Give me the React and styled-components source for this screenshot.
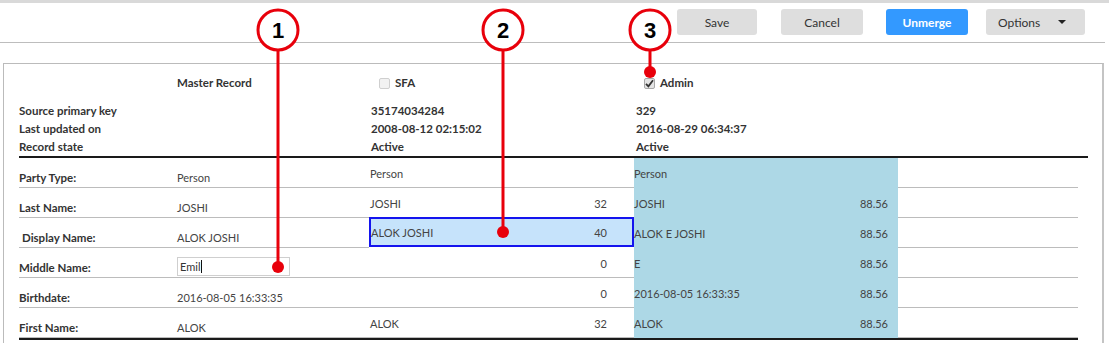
import React from 'react';
import styled, { createGlobalStyle } from 'styled-components';

const Global = createGlobalStyle`
  html, body { margin: 0; padding: 0; background: #fff; }
  body { font-family: Lato, "Open Sans", sans-serif; color: #333; }
`;

const Page = styled.div`
  position: relative;
  width: 1109px;
  height: 343px;
  overflow: hidden;
`;

const TopStrip = styled.div`
  height: 3px;
  background: #d9d9d9;
`;

const Toolbar = styled.div`
  display: flex;
  justify-content: flex-end;
  align-items: flex-start;
  height: 40px;
  box-sizing: border-box;
  padding: 6px 20px 0 0;
  margin-right: 4px;
  border-bottom: 1px solid #bdbdbd;
`;

const Button = styled.button`
  height: 26px;
  width: ${(p) => p.$w}px;
  margin-left: ${(p) => p.$ml || 0}px;
  border: none;
  border-radius: 3px;
  background: ${(p) => (p.$primary ? '#3399ff' : '#dedede')};
  color: ${(p) => (p.$primary ? '#fff' : '#333')};
  font-family: Lato, "Open Sans", sans-serif;
  font-size: 12px;
  font-weight: ${(p) => (p.$primary ? 700 : 400)};
  display: flex;
  align-items: center;
  justify-content: ${(p) => (p.$menu ? 'flex-start' : 'center')};
  padding: ${(p) => (p.$menu ? '0 0 0 12px' : '0')};
  box-sizing: border-box;
`;

const Caret = styled.span`
  width: 0;
  height: 0;
  margin-left: 18px;
  border-left: 4px solid transparent;
  border-right: 4px solid transparent;
  border-top: 4px solid #222;
`;

const Panel = styled.div`
  margin: 20px 5px 0 3px;
  border: 1px solid #bbb;
  border-right: 2px solid #c4c4c4;
  padding: 0 0 20px 15px;
  min-height: 300px;
`;

const HeaderRow = styled.div`
  display: grid;
  grid-template-columns: 158px 192px 265px 264px;
  padding-top: 12px;
  height: 14px;
  line-height: 14px;
  font-size: 11.5px;
  font-weight: 700;
`;

const CheckLabel = styled.div`
  display: flex;
  align-items: center;
  gap: 5px;
  padding-left: 10px;
`;

const Box = styled.span`
  width: 11px;
  height: 11px;
  box-sizing: border-box;
  border: 1px solid ${(p) => (p.$checked ? '#a8a8a8' : '#cfcfcf')};
  border-radius: 2px;
  background: ${(p) => (p.$checked ? '#e4e4e4' : '#f2f2f2')};
  display: flex;
  align-items: center;
  justify-content: center;
`;

const Meta = styled.div`
  width: 1069px;
  margin-top: 12px;
  border-bottom: 2px solid #1a1a1a;
`;

const MetaRow = styled.div`
  display: grid;
  grid-template-columns: 158px 192px 265px 1fr;
  height: 18px;
  line-height: 18px;
  font-size: 11.5px;
  font-weight: 700;
`;

const MetaValue = styled.div`
  padding-left: 2px;
`;

const Table = styled.div`
  width: 1059px;
  border-bottom: 2px solid #1a1a1a;
`;

const Row = styled.div`
  display: grid;
  grid-template-columns: 158px 192px 265px 264px 180px;
  height: 30px;
  font-size: 11px;
  line-height: 14px;
`;

const Cell = styled.div`
  box-sizing: border-box;
  border-bottom: 1px solid ${(p) => (p.$admin ? '#add8e6' : '#bcbcbc')};
  background: ${(p) => (p.$admin ? '#add8e6' : 'transparent')};
  color: #444;
  white-space: nowrap;
`;

const LabelCell = styled(Cell)`
  padding: 13px 0 0 ${(p) => (p.$indent ? 3 : 0)}px;
  font-size: 11.5px;
  font-weight: 700;
  color: #333;
`;

const MasterCell = styled(Cell)`
  padding-top: 13px;
`;

const InputCell = styled(Cell)`
  padding-top: 9px;
`;

const FakeInput = styled.div`
  width: 113px;
  height: 19px;
  box-sizing: border-box;
  border: 1px solid #cfcfcf;
  padding: 2px 0 0 2px;
  display: flex;
  align-items: flex-start;
  color: #333;
`;

const TextCaret = styled.span`
  width: 1px;
  height: 13px;
  background: #111;
  margin-left: 1px;
`;

const ScoreCell = styled(Cell)`
  display: flex;
  justify-content: space-between;
  align-items: flex-start;
  padding: ${(p) => (p.$sel ? '7px 25px 0 0' : '9px 27px 0 1px')};
  ${(p) =>
    p.$sel &&
    `
    background: #c6e3fb;
    border: 2px solid #1414ee;
    height: 30px;
    margin-top: -1px;
  `}
`;

const AdminCell = styled(Cell)`
  display: flex;
  justify-content: space-between;
  align-items: flex-start;
  padding: 9px 10px 0 0;
`;

const Overlay = styled.svg`
  position: absolute;
  left: 0;
  top: 0;
  pointer-events: none;
`;

const rows = [
  { label: 'Party Type:', master: 'Person', sfa: 'Person', sfaScore: '', admin: 'Person', adminScore: '' },
  { label: 'Last Name:', master: 'JOSHI', sfa: 'JOSHI', sfaScore: '32', admin: 'JOSHI', adminScore: '88.56' },
  { label: 'Display Name:', indent: true, master: 'ALOK JOSHI', sfa: 'ALOK JOSHI', sfaScore: '40', sel: true, admin: 'ALOK E JOSHI', adminScore: '88.56' },
  { label: 'Middle Name:', input: 'Emil', sfa: '', sfaScore: '0', admin: 'E', adminScore: '88.56' },
  { label: 'Birthdate:', master: '2016-08-05 16:33:35', sfa: '', sfaScore: '0', admin: '2016-08-05 16:33:35', adminScore: '88.56' },
  { label: 'First Name:', master: 'ALOK', sfa: 'ALOK', sfaScore: '32', admin: 'ALOK', adminScore: '88.56' },
];

const callouts = [
  { n: '1', x: 278, dotY: 267 },
  { n: '2', x: 503, dotY: 232 },
  { n: '3', x: 650, dotY: 72 },
];

export default function App() {
  return (
    <Page>
      <Global />
      <TopStrip />
      <Toolbar>
        <Button $w={80}>Save</Button>
        <Button $w={82} $ml={24}>Cancel</Button>
        <Button $w={82} $ml={23} $primary>Unmerge</Button>
        <Button $w={99} $ml={18} $menu>
          Options
          <Caret />
        </Button>
      </Toolbar>
      <Panel>
        <HeaderRow>
          <div />
          <div>Master Record</div>
          <CheckLabel>
            <Box />
            SFA
          </CheckLabel>
          <CheckLabel>
            <Box $checked>
              <svg width="9" height="9" viewBox="0 0 9 9">
                <path d="M1 4.8 L3.4 7.3 L8 1.2" fill="none" stroke="#333" strokeWidth="1.8" />
              </svg>
            </Box>
            Admin
          </CheckLabel>
        </HeaderRow>
        <Meta>
          <MetaRow>
            <div>Source primary key</div>
            <div />
            <MetaValue>35174034284</MetaValue>
            <MetaValue>329</MetaValue>
          </MetaRow>
          <MetaRow>
            <div>Last updated on</div>
            <div />
            <MetaValue>2008-08-12 02:15:02</MetaValue>
            <MetaValue>2016-08-29 06:34:37</MetaValue>
          </MetaRow>
          <MetaRow>
            <div>Record state</div>
            <div />
            <MetaValue>Active</MetaValue>
            <MetaValue>Active</MetaValue>
          </MetaRow>
        </Meta>
        <Table>
          {rows.map((r) => (
            <Row key={r.label}>
              <LabelCell $indent={r.indent}>{r.label}</LabelCell>
              {r.input ? (
                <InputCell>
                  <FakeInput>
                    {r.input}
                    <TextCaret />
                  </FakeInput>
                </InputCell>
              ) : (
                <MasterCell>{r.master}</MasterCell>
              )}
              <ScoreCell $sel={r.sel}>
                <span>{r.sfa}</span>
                <span>{r.sfaScore}</span>
              </ScoreCell>
              <AdminCell $admin>
                <span>{r.admin}</span>
                <span>{r.adminScore}</span>
              </AdminCell>
              <Cell />
            </Row>
          ))}
        </Table>
      </Panel>
      <Overlay width="1109" height="343" viewBox="0 0 1109 343">
        {callouts.map((c) => (
          <g key={c.n}>
            <line x1={c.x} y1={50} x2={c.x} y2={c.dotY} stroke="#e8000b" strokeWidth="3" />
            <circle cx={c.x} cy={c.dotY} r="6" fill="#e8000b" />
            <circle cx={c.x} cy={30} r="20" fill="#fff" stroke="#e8000b" strokeWidth="3" />
            <text
              x={c.x}
              y={38}
              textAnchor="middle"
              fontFamily="'Liberation Sans', Arial, sans-serif"
              fontWeight="700"
              fontSize="22"
              fill="#000"
            >
              {c.n}
            </text>
          </g>
        ))}
      </Overlay>
    </Page>
  );
}
